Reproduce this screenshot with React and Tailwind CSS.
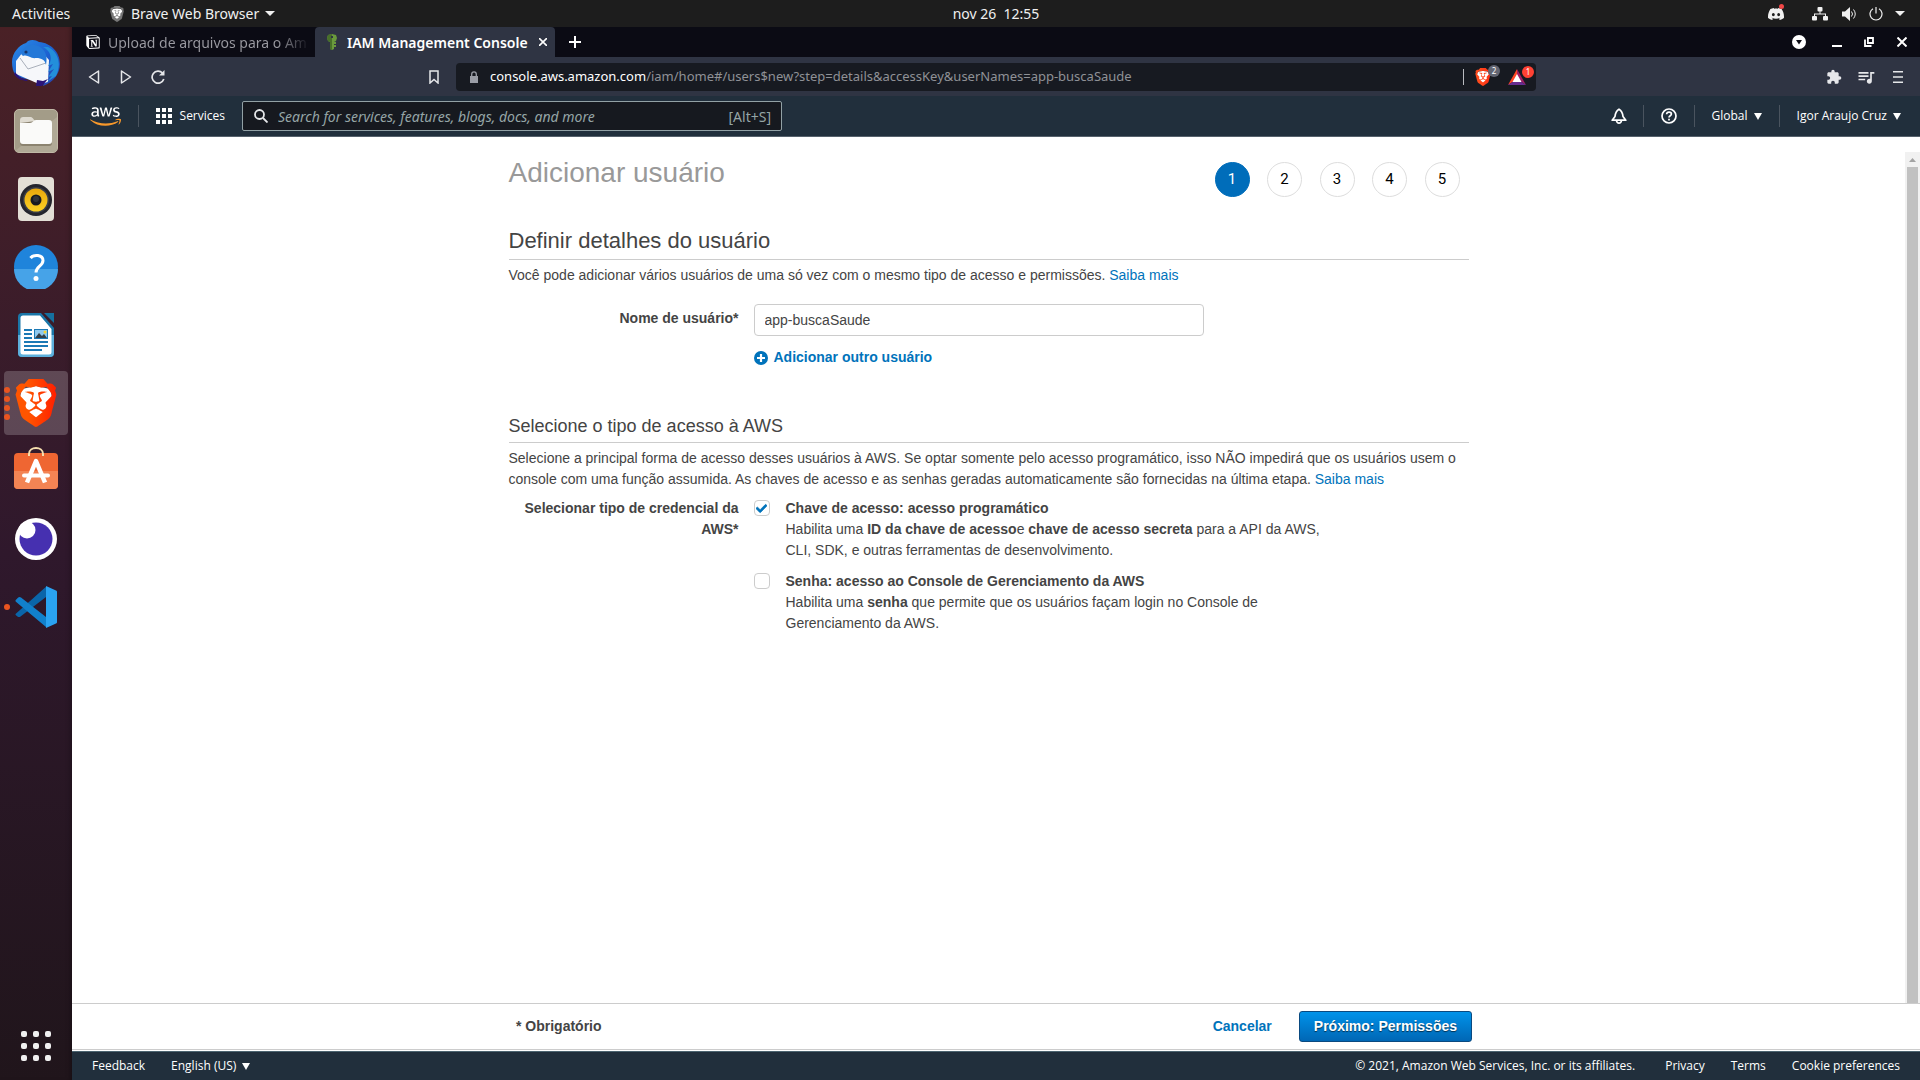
import React from "react";
import { SiBrave, SiDiscord, SiNotion } from "react-icons/si";
import { FaAws, FaCheck } from "react-icons/fa";
import { MdExtension, MdQueueMusic } from "react-icons/md";

const Caret = ({ className = "" }) => (
  <svg viewBox="0 0 8 7" className={`h-[7px] w-2 fill-current ${className}`} aria-hidden="true">
    <path d="M0 0h8L4 7z" />
  </svg>
);

const LION_BACK = "M5 5 L12 3.5 L19 5 L20 9 L17 17 L12 21.5 L7 17 L4 9Z";

const BraveLogo = ({ className, from = "#ff5500", to = "#ff1f00", id }) => (
  <span className={`grid ${className}`}>
    <svg viewBox="0 0 24 24" className="col-start-1 row-start-1 h-full w-full" aria-hidden="true">
      <defs>
        <linearGradient id={id} x1="0" x2="1">
          <stop offset="0.3" stopColor={from} />
          <stop offset="1" stopColor={to} />
        </linearGradient>
      </defs>
      <path d={LION_BACK} fill="#fff" />
    </svg>
    <SiBrave className="col-start-1 row-start-1 h-full w-full" style={{ fill: `url(#${id})` }} />
  </span>
);

const Thunderbird = () => (
  <svg viewBox="0 0 48 48" className="size-12">
    <defs>
      <linearGradient id="tb" x1="0" y1="0" x2="1" y2="1">
        <stop offset="0" stopColor="#2a8be8" />
        <stop offset="0.55" stopColor="#1c5fd0" />
        <stop offset="1" stopColor="#2a3fa8" />
      </linearGradient>
    </defs>
    <path d="M16 2c4-2 8-1 11 1 12 1 21 10 21 22 0 9-6 18-17 22l1-3-6 3 2-5C14 41 4 37 4 37 1 33 0 28 0 23 0 14 7 6 14 4z" fill="url(#tb)" />
    <path d="M4 22 14 9l15 3 8 9-1 22-9 2L4 35z" fill="#f6f7fa" />
    <path d="m8 19 8 11 18-6" fill="none" stroke="#a9afba" strokeWidth="1" />
    <path d="M9 15c3-8 9-11 17-8 7 3 10 9 8 19-1-5-4-7-10-7-6 1-8-4-13-2z" fill="#2478d8" />
    <path d="M31 8c8 4 10 12 5 19l5-2-5 8 6-3-6 8 4-1-5 6 9-6c5-10 4-23-8-29z" fill="#238fdb" />
    <path d="M3 33c5 7 11 7 13 9-5 0-11-2-14-7zM25 41l6 1 5-2-6 7-6 0z" fill="#2b1478" />
    <circle cx="14" cy="13" r="1.6" fill="#17356b" />
  </svg>
);

const Files = () => (
  <svg viewBox="0 0 44 44" className="size-11">
    <rect x=".5" y=".5" width="43" height="43" rx="4.5" fill="#a39c88" stroke="#c0b9a6" />
    <path d="M1 42 43 8v31a4 4 0 0 1-4 4H4z" fill="#b0a996" />
    <path d="M6 11a3 3 0 0 1 3-3h8c2 0 3 4 5 4h13a3 3 0 0 1 3 3v19a3 3 0 0 1-3 3H9a3 3 0 0 1-3-3z" fill="#8b8370" />
    <path d="M6 14v-3a3 3 0 0 1 3-3h8c2 0 3 4 5 4z" fill="#dedad0" />
    <path d="M6 14h10c3 0 3-3 6-3h13a3 3 0 0 1 3 3v18a3 3 0 0 1-3 3H9a3 3 0 0 1-3-3z" fill="#fafaf9" />
  </svg>
);

const Rhythmbox = () => (
  <svg viewBox="0 0 36 44" className="h-11 w-9">
    <defs>
      <linearGradient id="rb" x1="0" y1="0" x2="0" y2="1">
        <stop offset="0" stopColor="#e8a70c" />
        <stop offset="1" stopColor="#fbd023" />
      </linearGradient>
    </defs>
    <rect width="36" height="44" rx="4" fill="#e3dfd6" />
    <circle cx="18" cy="23" r="16" fill="#24252d" />
    <circle cx="18" cy="23" r="13" fill="#3b3f48" />
    <circle cx="18" cy="23" r="11.5" fill="url(#rb)" />
    <circle cx="18" cy="23" r="5.5" fill="#191b20" />
    <circle cx="18" cy="22" r="3" fill="#30343a" />
  </svg>
);

const Help = () => (
  <svg viewBox="0 0 44 44" className="size-11">
    <circle cx="22" cy="22" r="22" fill="#1f84db" />
    <path d="M0 24h44a22 22 0 0 1-44 0" fill="#46a3e8" />
    <path d="M16.5 13c3-4 12.500-3.500 12.500 2.500 0 5.500-7 6-7 12" fill="none" stroke="#fff" strokeWidth="3" />
    <circle cx="22" cy="33.500" r="2.500" fill="#fff" />
  </svg>
);

const Writer = () => (
  <svg viewBox="0 0 36 44" className="h-11 w-9">
    <path d="M4 0h19l13 15v25a4 4 0 0 1-4 4H4a4 4 0 0 1-4-4V4a4 4 0 0 1 4-4z" fill="#1a76a8" />
    <path d="M0 22h36v18a4 4 0 0 1-4 4H4a4 4 0 0 1-4-4z" fill="#5db0dc" />
    <path d="M5 2.500h17L33.500 16v23a2.500 2.500 0 0 1-2.500 2.500H5A2.500 2.500 0 0 1 2.500 39V5A2.500 2.500 0 0 1 5 2.500z" fill="#fff" />
    <path d="M26 0h10v10z" fill="#15709f" />
    <path d="M6 16h8v2H6zM6 20h8v2H6zM6 24h8v2H6zM6 28h24v2H6zM6 32h24v2H6zM6 36h18v2H6z" fill="#1b79b5" />
    <path d="M16 16h14v10H16z" fill="#1b79b5" />
    <path d="M17 17h12v8H17z" fill="#8fc9ee" />
    <path d="m17 25 4-5 3 3 2-2 3 4z" fill="#333f48" />
    <circle cx="27" cy="19" r="1.500" fill="#f7d32f" />
  </svg>
);

const Software = () => (
  <svg viewBox="0 2 44 44" className="size-11 overflow-visible">
    <path d="M0 10a4 4 0 0 1 4-4h36a4 4 0 0 1 4 4v28a4 4 0 0 1-4 4H4a4 4 0 0 1-4-4z" fill="#ef6632" />
    <path d="M0 24h44v14a4 4 0 0 1-4 4H4a4 4 0 0 1-4-4z" fill="#f38454" />
    <path d="M15 9V7c0-8 14-8 14 0v2" fill="none" stroke="#f6dfae" strokeWidth="2" />
    <path d="M13 35.500 22 14l9 21.500" fill="none" stroke="#fff" strokeWidth="4.500" strokeLinejoin="round" />
    <path d="M10 28.500h24" stroke="#fff" strokeWidth="4" strokeLinecap="round" />
  </svg>
);

const Insomnia = () => (
  <svg viewBox="0 0 42 42" className="size-[42px]">
    <circle cx="21" cy="21" r="21" fill="#fff" />
    <circle cx="21" cy="21" r="16.500" fill="#4630b0" />
    <circle cx="12" cy="12" r="8.500" fill="#fff" />
  </svg>
);

const VsCode = () => (
  <svg viewBox="0 0 42 42" className="size-[42px]">
    <path d="M.5 28 31 .8V11L5.500 30.500c-1 .8-2 .6-3 0L.6 29z" fill="#0a65a9" />
    <path d="M.5 14.200 3.200 11.500c.8-.7 1.800-.8 2.800 0L31 31v10L.6 15.500z" fill="#1180cc" />
    <path d="M31 0v42l10-4.500c.7-.3 1-.7 1-1.500V6c0-.8-.3-1.200-1-1.500z" fill="#2aa3f2" />
  </svg>
);

const dock = [
  { name: "Thunderbird", icon: <Thunderbird /> },
  { name: "Files", icon: <Files /> },
  { name: "Rhythmbox", icon: <Rhythmbox /> },
  { name: "Help", icon: <Help /> },
  { name: "LibreOffice Writer", icon: <Writer /> },
  { name: "Brave", icon: <BraveLogo className="size-12" id="braveDock" />, dots: 4, active: true },
  { name: "Software", icon: <Software /> },
  { name: "Insomnia", icon: <Insomnia /> },
  { name: "Code", icon: <VsCode />, dots: 1 },
];

const TopBar = () => (
  <header className="grid h-[27px] shrink-0 grid-cols-[72px_1fr_auto_1fr] items-center bg-[#1d1d1d] text-[14px] leading-[27px] text-[#f0f0f0]">
    <button className="ml-3 text-left">Activities</button>
    <div className="pl-[37px]">
      <button className="flex items-center">
        <BraveLogo className="mr-1.5 size-4" from="#777" to="#777" id="braveMono" />
        Brave Web Browser
        <svg viewBox="0 0 10 5" className="ml-1.5 h-[5px] w-2.5 fill-current"><path d="M0 0h10L5 5z" /></svg>
      </button>
    </div>
    <button className="whitespace-pre">nov 26  12:55</button>
    <div className="flex items-center justify-end pr-[15px]">
      <span className="relative mr-7">
        <SiDiscord className="size-4" />
        <span className="absolute -top-0.5 right-0 size-[5px] rounded-full bg-[#f04747]" />
      </span>
      <svg viewBox="0 0 16 14" className="mr-3.5 h-3.5 w-4 fill-current">
        <rect x="5.500" width="5" height="4.500" rx="1" /><rect y="9" width="5" height="4.500" rx="1" /><rect x="11" y="9" width="5" height="4.500" rx="1" />
        <path d="M7.500 4h1v2.500H14V9h-1V7.500H3V9H2V6.500h5.500z" />
      </svg>
      <svg viewBox="0 0 15 14" className="mr-3 h-3.5 w-[15px]">
        <path d="M0 4.500h3L8 0v14L3 9.500H0z" fill="currentColor" />
        <path d="M9.500 4.500q2 2.500 0 5M11.500 2.500q3.500 4.500 0 9" fill="none" stroke="currentColor" />
      </svg>
      <svg viewBox="0 0 14 14" className="mr-3 size-3.5" fill="none" stroke="currentColor" strokeWidth="1.200">
        <path d="M7 0v6.500M4 1.800a6 6 0 1 0 6 0" />
      </svg>
      <svg viewBox="0 0 10 5" className="h-[5px] w-2.5 fill-current"><path d="M0 0h10L5 5z" /></svg>
    </div>
  </header>
);

const Dock = () => (
  <nav className="flex w-[72px] shrink-0 flex-col justify-between bg-linear-to-b from-[#4a2126] via-[#2f182c] to-[#20151b] shadow-[inset_-4px_0_5px_-3px_rgba(0,0,0,0.35)]">
    <ul className="flex flex-col gap-1 px-1 pt-1">
      {dock.map((app) => (
        <li key={app.name}>
          <button
            aria-label={app.name}
            className={`relative flex size-16 items-center justify-center rounded-[4px] ${app.active ? "bg-white/20" : ""}`}
          >
            {app.dots && (
              <span className="absolute inset-y-0 left-0 flex flex-col items-center justify-center gap-[3px]">
                {Array.from({ length: app.dots }, (_, i) => (
                  <i key={i} className="size-1.5 rounded-full bg-[#e95420]" />
                ))}
              </span>
            )}
            {app.icon}
          </button>
        </li>
      ))}
    </ul>
    <button aria-label="Show applications" className="mx-auto mb-[19px] grid grid-cols-3 gap-1.5">
      {Array.from({ length: 9 }, (_, i) => (
        <i key={i} className="size-1.5 rounded-[2px] bg-[#f0f0f0]" />
      ))}
    </button>
  </nav>
);

const TabStrip = () => (
  <div className="flex h-[30px] items-center bg-[#0b0b14] text-[14px] text-white">
    <button className="flex h-full w-[243px] items-center pl-3.5 text-[#9b9ba2]">
      <SiNotion className="mr-2 size-3.5 shrink-0 text-white" />
      <span className="whitespace-nowrap bg-linear-to-r from-[#9b9ba2] from-85% to-[#9b9ba2]/10 bg-clip-text text-left text-transparent">
        Upload de arquivos para o Am
      </span>
    </button>
    <div className="flex h-full w-60 items-center rounded-t-[4px] bg-[#2f3443] pl-3">
      <svg viewBox="0 0 10 16" className="mr-2.5 h-4 w-2.5">
        <path d="M1 1 5 0l4 1 1 3-1 3-2 1v7l-2 1-2-1V8L1 7 0 4z" fill="#6a9a3c" />
        <path d="M5 0 1 1 0 4l1 3 2 1v7l2 1z" fill="#48702a" />
        <path d="M4 2h2v2H4zM7 9h2v2H7zM7 12h2v2H7z" fill="#2f3443" />
        <path d="M7 8h2v2H7zM7 11h2v2H7z" fill="#6a9a3c" />
      </svg>
      <button className="grow whitespace-nowrap text-left font-semibold">IAM Management Console</button>
      <button aria-label="Close tab" className="mr-2">
        <svg viewBox="0 0 8 8" className="size-2" stroke="#fff" strokeWidth="1.600"><path d="m0 0 8 8M8 0 0 8" /></svg>
      </button>
    </div>
    <button aria-label="New tab" className="ml-3.5">
      <svg viewBox="0 0 12 12" className="size-3" stroke="#fff" strokeWidth="2"><path d="M6 0v12M0 6h12" /></svg>
    </button>
    <div className="ml-auto flex items-center pr-[13px]">
      <button aria-label="Tab search" className="mr-[26px]">
        <svg viewBox="0 0 14 14" className="size-3.5"><circle cx="7" cy="7" r="7" fill="#fff" /><path d="M4 5h6L7 9.500z" fill="#0b0b14" /></svg>
      </button>
      <button aria-label="Minimize" className="mr-[22px]">
        <svg viewBox="0 0 10 10" className="size-2.5"><path d="M0 8h10v2H0z" fill="#fff" /></svg>
      </button>
      <button aria-label="Restore" className="mr-[23px]">
        <svg viewBox="0 0 10 10" className="size-2.5" fill="none" stroke="#fff" strokeWidth="1.800"><path d="M3.900 1H9v5H3.900zM1 2.500V9h6.500" /></svg>
      </button>
      <button aria-label="Close">
        <svg viewBox="0 0 10 10" className="size-2.5" stroke="#fff" strokeWidth="2"><path d="m.5.5 9 9M9.500.5l-9 9" /></svg>
      </button>
    </div>
  </div>
);

const Toolbar = () => (
  <div className="flex h-[39px] items-center bg-[#2f3443] text-[#e6e7ea]">
    <div className="flex w-[384px] items-center pl-4">
      <button aria-label="Back" className="mr-5">
        <svg viewBox="0 0 12 14" className="h-3.5 w-3" fill="none" stroke="currentColor" strokeWidth="1.500" strokeLinejoin="round"><path d="M10.500 1v12L1.500 7z" /></svg>
      </button>
      <button aria-label="Forward" className="mr-[19px]">
        <svg viewBox="0 0 12 14" className="h-3.5 w-3" fill="none" stroke="currentColor" strokeWidth="1.500" strokeLinejoin="round"><path d="M1.500 1v12l9-6z" /></svg>
      </button>
      <button aria-label="Reload">
        <svg viewBox="0 0 14 14" className="size-3.5" fill="none" stroke="currentColor" strokeWidth="1.700"><path d="M12.800 9A6 6 0 1 1 11.500 3" /><path d="M8 5.500h5.500V0z" fill="currentColor" stroke="none" /></svg>
      </button>
      <button aria-label="Bookmark" className="ml-auto mr-[17px]">
        <svg viewBox="0 0 10 14" className="h-3.5 w-2.5" fill="none" stroke="currentColor" strokeWidth="1.500"><path d="M1 1h8v12l-4-3.500L1 13z" /></svg>
      </button>
    </div>
    <div className="flex h-7 w-[1080px] items-center rounded-[4px] bg-[#171a21] pl-3.5 pr-2.5">
      <svg viewBox="0 0 8 12" className="mr-3 h-3 w-2"><path d="M0 5h8v7H0z" fill="#9a9da6" /><path d="M1.700 5V3.200a2.300 2.300 0 0 1 4.600 0V5" fill="none" stroke="#9a9da6" strokeWidth="1.300" /></svg>
      <span className="grow text-[13px] text-[#8f9196]">
        <span className="text-white">console.aws.amazon.com</span>/iam/home#/users$new?step=details&amp;accessKey&amp;userNames=app-buscaSaude
      </span>
      <span className="mr-2.5 h-4 w-px bg-[#b9bbc0]" />
      <button aria-label="Brave Shields" className="relative mr-4">
        <BraveLogo className="size-[18px]" from="#ff4a1c" to="#ff2a12" id="braveUrl" />
        <span className="absolute -right-2 -top-[3px] size-3 rounded-full bg-[#636673] text-center text-[8px] leading-3 text-white">2</span>
      </button>
      <button aria-label="Brave Rewards" className="relative">
        <svg viewBox="0 0 18 16" className="h-4 w-[18px]">
          <path d="M9 0 0 16l9-6z" fill="#ff4724" /><path d="M9 0l9 16-9-6z" fill="#9e1f63" /><path d="M0 16h18l-9-6z" fill="#662d91" />
          <path d="m9 5 4.500 8h-9z" fill="#fff" />
        </svg>
        <span className="absolute -right-2 -top-[3px] size-3 rounded-full bg-[#ff4133] text-center text-[8px] leading-3 text-white">1</span>
      </button>
    </div>
    <div className="ml-auto flex items-center pr-[17px]">
      <button aria-label="Extensions" className="mr-3.5"><MdExtension className="size-4" /></button>
      <button aria-label="Media" className="mr-[17px]"><MdQueueMusic className="size-5" /></button>
      <button aria-label="Menu">
        <svg viewBox="0 0 10 12" className="h-3 w-2.5" fill="currentColor"><path d="M0 0h10v1.600H0zM0 5.200h10v1.600H0zM0 10.400h10V12H0z" /></svg>
      </button>
    </div>
  </div>
);

const NavDivider = () => <span className="h-[22px] w-px bg-[#4a545f]" />;

const AwsNav = () => (
  <header className="flex h-[41px] items-center border-b border-[#56616c] bg-[#212f3c] font-['Open_Sans','Noto_Sans',sans-serif] text-[12px] text-white">
    <svg className="absolute size-0" aria-hidden="true">
      <defs>
        <linearGradient id="awsFill" gradientUnits="userSpaceOnUse" x1="0" y1="0" x2="0" y2="512">
          <stop offset="0.567" stopColor="#fff" />
          <stop offset="0.567" stopColor="#f8982a" />
        </linearGradient>
      </defs>
    </svg>
    <a href="#home" aria-label="AWS" className="ml-[18px] mr-[17px]">
      <FaAws className="h-[25px] w-[31px]" style={{ fill: "url(#awsFill)" }} />
    </a>
    <NavDivider />
    <button className="ml-[17px] flex w-[69px] items-center gap-2">
      <span className="grid grid-cols-3 gap-0.5">
        {Array.from({ length: 9 }, (_, i) => <i key={i} className="size-1 bg-white" />)}
      </span>
      Services
    </button>
    <label className="ml-[17px] flex h-[30px] w-[540px] items-center rounded-[2px] border border-[#92a1a5] bg-[#16191f] pl-[11px] pr-2.5 font-['Noto_Sans',sans-serif] text-[14px] text-[#95a5a6]">
      <svg viewBox="0 0 14 14" className="mr-2.5 size-3.5 shrink-0" fill="none" stroke="#e6e8ea" strokeWidth="1.800"><circle cx="5.500" cy="5.500" r="4.500" /><path d="m9 9 4.500 4.500" /></svg>
      <input
        type="text"
        aria-label="Search"
        placeholder="Search for services, features, blogs, docs, and more"
        className="min-w-0 grow bg-transparent italic outline-none placeholder:text-[#95a5a6]"
      />
      <span>[Alt+S]</span>
    </label>
    <div className="ml-auto flex items-center pr-[19px]">
      <button aria-label="Notifications" className="mr-4">
        <svg viewBox="0 0 16 16" className="size-4" fill="none" stroke="#fff" strokeWidth="1.700" strokeLinejoin="round"><path d="M1.200 12.200h13.600L12 8.500C11.500 4 10.500 2.500 8 1.200 5.500 2.500 4.500 4 4 8.500zM5.500 12.500c.5 3.500 4.500 3.500 5 0" /></svg>
      </button>
      <NavDivider />
      <button aria-label="Help" className="mx-[17px]">
        <svg viewBox="0 0 16 16" className="size-4" fill="none" stroke="#fff" strokeWidth="1.700"><circle cx="8" cy="8" r="7" /><path d="M5.600 6.300c.2-3 4.800-2.800 4.800-.2C10.400 7.800 8 7.700 8 9.500M8 10.700v1.700" /></svg>
      </button>
      <NavDivider />
      <button className="mx-[17px] flex items-center gap-1.5">Global <Caret /></button>
      <NavDivider />
      <button className="ml-[17px] flex items-center gap-1.5">Igor Araujo Cruz <Caret /></button>
    </div>
  </header>
);

const CheckBox = ({ id, defaultChecked }) => (
  <span className="mt-0.5 grid size-4 shrink-0 place-items-center">
    <input
      id={id}
      type="checkbox"
      defaultChecked={defaultChecked}
      className="peer col-start-1 row-start-1 size-4 appearance-none rounded-[4px] border border-[#ccc] bg-white"
    />
    <FaCheck className="pointer-events-none invisible col-start-1 row-start-1 size-[11px] stroke-current stroke-[30px] text-[#0073bb] peer-checked:visible" />
  </span>
);

const Steps = () => (
  <ol className="mr-[9px] mt-0.5 flex w-[245px] justify-between font-['Roboto',sans-serif] text-[15px] text-black">
    {[1, 2, 3, 4, 5].map((n) => (
      <li
        key={n}
        className={`flex size-[35px] items-center justify-center rounded-full border ${n === 1 ? "border-[#006dba] bg-[#006dba] text-white" : "border-[#ddd]"}`}
      >
        {n}
      </li>
    ))}
  </ol>
);

const Wizard = () => (
  <main className="flex flex-1 bg-white pt-[15px] font-['Liberation_Sans',Arial,sans-serif] text-[14px] leading-[21px] text-[#444]">
    <div className="min-w-0 flex-1 pt-2">
      <div className="mx-auto max-w-[960px]">
        <div className="flex items-start justify-between">
          <h1 className="text-[28px] leading-[26px] text-[#999]">Adicionar usuário</h1>
          <Steps />
        </div>

        <h2 className="mt-[30px] border-b border-[#ccc] pb-1 text-[22px] leading-7">Definir detalhes do usuário</h2>
        <p className="mt-[5px]">
          Você pode adicionar vários usuários de uma só vez com o mesmo tipo de acesso e permissões.{" "}
          <a href="#saiba-mais" className="text-[#0073bb]">Saiba mais</a>
        </p>
        <div className="mt-[18px] grid grid-cols-[230px_450px] gap-x-[15px]">
          <label htmlFor="username" className="pt-1 text-right font-bold">Nome de usuário*</label>
          <input
            id="username"
            type="text"
            defaultValue="app-buscaSaude"
            className="h-8 rounded-[4px] border border-[#ccc] px-2.5 text-[#444]"
          />
          <button className="col-start-2 mt-[11px] flex items-center gap-1.5 justify-self-start font-bold text-[#0073bb]">
            <svg viewBox="0 0 14 14" className="size-3.5"><circle cx="7" cy="7" r="7" fill="#0073bb" /><path d="M7 3v8M3 7h8" stroke="#fff" strokeWidth="2.200" /></svg>
            Adicionar outro usuário
          </button>
        </div>

        <h3 className="mt-[46px] border-b border-[#ccc] pb-1 text-[18px] leading-6">Selecione o tipo de acesso à AWS</h3>
        <p className="mt-[5px]">
          Selecione a principal forma de acesso desses usuários à AWS. Se optar somente pelo acesso programático, isso NÃO impedirá que os usuários usem o console com uma função assumida. As chaves de acesso e as senhas geradas automaticamente são fornecidas na última etapa.{" "}
          <a href="#saiba-mais-acesso" className="text-[#0073bb]">Saiba mais</a>
        </p>
        <fieldset className="mt-2 grid grid-cols-[230px_582px] gap-x-[15px]" aria-labelledby="credential">
          <span id="credential" className="text-right font-bold">Selecionar tipo de credencial da AWS*</span>
          <div className="flex flex-col gap-2.5">
            <div className="flex gap-4">
              <CheckBox id="access-key" defaultChecked />
              <label htmlFor="access-key">
                <b>Chave de acesso: acesso programático</b>
                <br />
                Habilita uma <b>ID da chave de acesso</b>e <b>chave de acesso secreta</b> para a API da AWS, CLI, SDK, e outras ferramentas de desenvolvimento.
              </label>
            </div>
            <div className="flex gap-4">
              <CheckBox id="password" />
              <label htmlFor="password">
                <b>Senha: acesso ao Console de Gerenciamento da AWS</b>
                <br />
                Habilita uma <b>senha</b> que permite que os usuários façam login no Console de Gerenciamento da AWS.
              </label>
            </div>
          </div>
        </fieldset>
      </div>
    </div>
    <div className="flex w-[15px] flex-col bg-[#f1f1f1]" aria-hidden="true">
      <svg viewBox="0 0 15 15" className="size-[15px]"><path d="M4 10h7L7.500 6z" fill="#a3a3a3" /></svg>
      <span className="mx-0.5 flex-1 bg-[#c1c1c1]" />
    </div>
  </main>
);

const ActionBar = () => (
  <div className="mb-px border-y border-[#ccc] bg-white font-['Liberation_Sans',Arial,sans-serif] text-[14px] font-bold">
    <div className="mx-auto flex h-[45px] max-w-[960px] items-center pr-1">
      <span className="grow text-[#444]">* Obrigatório</span>
      <button className="mr-[27px] text-[#0073bb]">Cancelar</button>
      <button className="h-[31px] rounded-[3px] border border-[#0a4a80] bg-linear-to-b from-[#0093ea] to-[#0067b5] px-3.5 text-white [text-shadow:0_1px_1px_rgba(0,0,0,0.6)]">
        Próximo: Permissões
      </button>
    </div>
  </div>
);

const Footer = () => (
  <footer className="flex h-[29px] items-center border-t border-[#4c6470] bg-[#212f3c] font-['Open_Sans','Noto_Sans',sans-serif] text-[12px] text-white">
    <a href="#feedback" className="ml-5 mr-[26px]">Feedback</a>
    <button className="flex items-center gap-1.5">English (US) <Caret /></button>
    <div className="ml-auto flex items-center pr-5">
      <span className="mr-[30px]">© 2021, Amazon Web Services, Inc. or its affiliates.</span>
      <a href="#privacy" className="mr-[26px]">Privacy</a>
      <a href="#terms" className="mr-[26px]">Terms</a>
      <a href="#cookies">Cookie preferences</a>
    </div>
  </footer>
);

export default function App() {
  return (
    <div className="flex min-h-screen flex-col bg-white font-['Noto_Sans','Open_Sans',sans-serif]">
      <TopBar />
      <div className="flex flex-1">
        <Dock />
        <div className="flex min-w-0 flex-1 flex-col">
          <TabStrip />
          <Toolbar />
          <AwsNav />
          <Wizard />
          <ActionBar />
          <Footer />
        </div>
      </div>
    </div>
  );
}
